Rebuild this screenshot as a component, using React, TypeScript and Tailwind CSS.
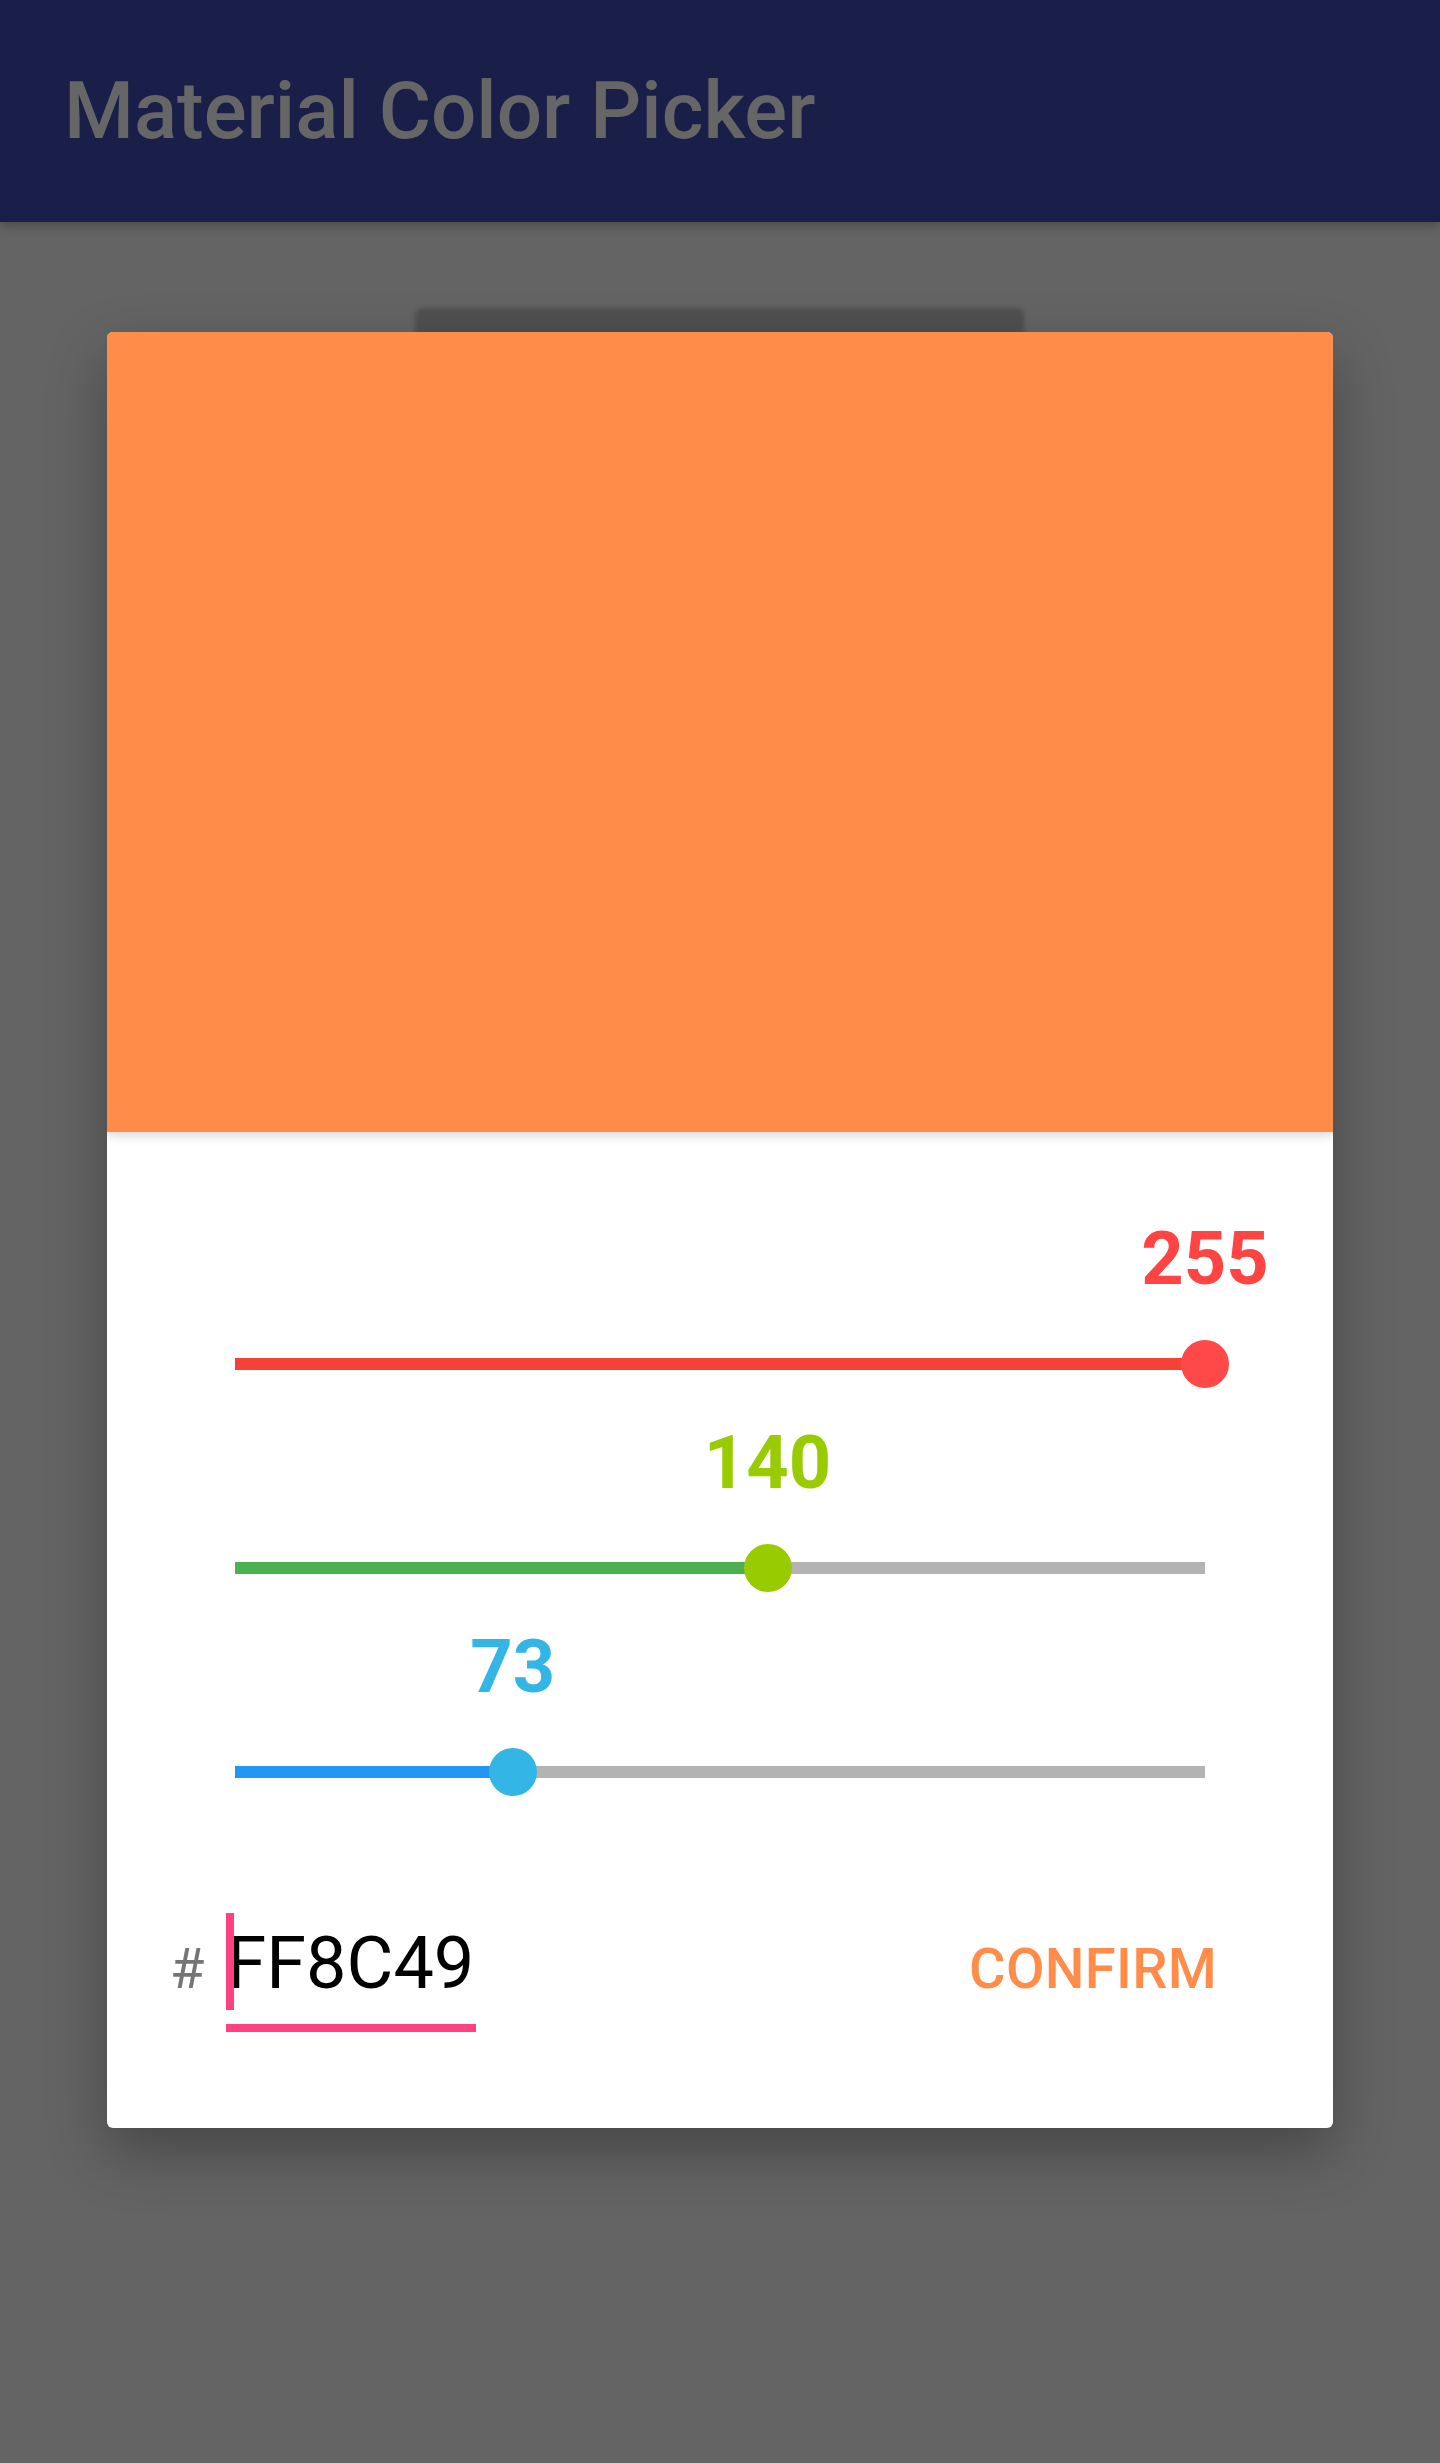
import React from "react";

const channels = [
  { value: 255, label: "text-[#ff4444]", fill: "bg-[#f44336]", thumb: "bg-[#ff4848]" },
  { value: 140, label: "text-[#99cc00]", fill: "bg-[#4caf50]", thumb: "bg-[#99cc00]" },
  { value: 73, label: "text-[#33b5e5]", fill: "bg-[#2196f3]", thumb: "bg-[#33b5e5]" },
];

function ChannelSlider({ value, label, fill, thumb }: (typeof channels)[number]) {
  const pct = (value / 255) * 100;

  return (
    <div className="flex flex-col">
      {/* value bubble follows the thumb */}
      <div className="relative h-[74px]">
        <span
          className={`absolute top-0 -translate-x-1/2 text-[74px] font-bold leading-[74px] ${label}`}
          style={{ left: `${pct}%` }}
        >
          {value}
        </span>
      </div>

      <div className="relative mt-[44px] flex h-[48px] items-center">
        <div className="h-[12px] w-full bg-[#b3b3b3]" />
        <div className={`absolute left-0 h-[12px] ${fill}`} style={{ width: `${pct}%` }} />
        <div
          className={`absolute h-[48px] w-[48px] -translate-x-1/2 rounded-full ${thumb}`}
          style={{ left: `${pct}%` }}
        />
      </div>
    </div>
  );
}

export default function App() {
  return (
    <main className="min-h-[2463px] bg-[#646464] font-['Roboto',sans-serif]">
      {/* App bar */}
      <header className="relative z-10 flex h-[222px] items-center bg-[#191f48] pl-[64px] shadow-[0_4px_10px_rgba(0,0,0,0.25)]">
        <h1 className="text-[80px] font-medium leading-none text-[#666666]">Material Color Picker</h1>
      </header>

      <section className="relative mx-auto mt-[110px] w-[1226px]">
        <div className="absolute left-[308px] top-[-24px] h-[60px] w-[609px] rounded-t-[8px] bg-[#505050] blur-[2px]" />

        <div className="relative overflow-hidden rounded-[6px] bg-white shadow-[0_24px_60px_rgba(0,0,0,0.3)]">
          <div className="relative z-10 h-[800px] bg-[#ff8c49] shadow-[0_4px_10px_rgba(0,0,0,0.15)]" />

          <div className="px-[128px] pt-[90px]">
            <div className="flex flex-col gap-[38px]">
              {channels.map((c) => (
                <ChannelSlider key={c.value} {...c} />
              ))}
            </div>
          </div>

          <div className="mt-[132px] flex items-baseline justify-between pb-[96px] pl-[63px] pr-[116px]">
            <div className="flex items-baseline">
              <span className="text-[56px] leading-none text-[#757575]">#</span>
              <div className="relative ml-[22px] border-b-[8px] border-[#ff4081] pb-[24px] pr-[2px]">
                <span className="absolute left-0 top-[-15px] h-[97px] w-[8px] bg-[#ff4081]" />
                <span className="block text-[72px] leading-[72px] text-black">FF8C49</span>
              </div>
            </div>
            <button className="text-[56px] font-medium leading-none tracking-[0.3px] text-[#ff8c49]">CONFIRM</button>
          </div>
        </div>
      </section>
    </main>
  );
}
